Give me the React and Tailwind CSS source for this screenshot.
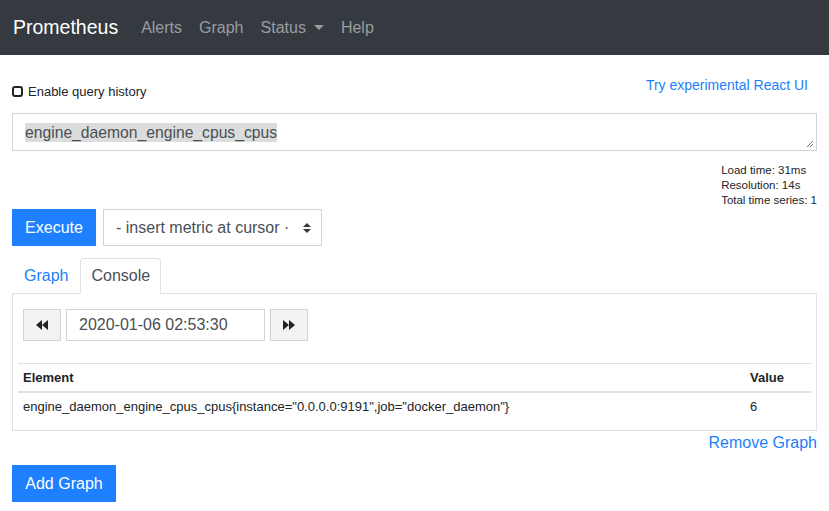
export default function App() {
  return (
    <div className="min-h-screen bg-white font-['Liberation_Sans',Arial,sans-serif] text-[#212529]">
      <nav className="h-[55px] bg-[#343a40] flex items-center pl-[13px]">
        <span className="text-white text-[19.5px] mr-[23px]">Prometheus</span>
        <div className="flex items-center gap-[17px] text-[16px] text-[#9a9da0]">
          <span>Alerts</span>
          <span>Graph</span>
          <span className="flex items-center">
            Status
            <svg width="10" height="6" viewBox="0 0 10 6" className="ml-[8px]">
              <path d="M0 0h10L5 5z" fill="#9a9da0" />
            </svg>
          </span>
          <span>Help</span>
        </div>
      </nav>

      <div className="px-3">
        <div className="h-[58px] flex justify-between items-start">
          <label className="mt-[29px] flex items-center text-[13px] leading-[15px]">
            <span className="w-[11px] h-[11px] border-2 border-[#222] rounded-[3px] mr-[5px]" />
            Enable query history
          </label>
          <a className="mt-[22px] mr-[9px] text-[14px] leading-[16px] text-[#1b7ffc]">Try experimental React UI</a>
        </div>

        <div className="relative h-[38px] border border-[#ced4da] flex items-center pl-[12px]">
          <span className="bg-[#dcdcdc] text-[#495057] text-[15.7px] leading-[19px]">engine_daemon_engine_cpus_cpus</span>
          <svg width="8" height="8" viewBox="0 0 8 8" className="absolute right-[2px] bottom-[2px]">
            <path d="M7 1L1 7M7 4L4 7" stroke="#777" strokeWidth="1" />
          </svg>
        </div>

        <div className="mt-[12px] flex justify-end">
          <div className="text-[11.5px] leading-[15px] text-[#212529]">
            <div>Load time: 31ms</div>
            <div>Resolution: 14s</div>
            <div>Total time series: 1</div>
          </div>
        </div>

        <div className="mt-[1px] flex items-center gap-[7px]">
          <button className="h-[37px] w-[84px] bg-[#1e80ff] text-white text-[16px] flex items-center justify-center">Execute</button>
          <div className="h-[37px] w-[219px] border border-[#ced4da] flex items-center pl-[12px] pr-[10px] text-[16px] text-[#495057]">
            <span className="flex-1 overflow-hidden whitespace-nowrap">- insert metric at cursor ·</span>
            <svg width="8" height="12" viewBox="0 0 8 12" className="ml-[4px]">
              <path d="M0 5L4 1L8 5z M0 7L4 11L8 7z" fill="#343a40" />
            </svg>
          </div>
        </div>

        <div className="mt-[12px] flex -mb-px relative">
          <a className="px-[11px] py-[5px] text-[16px] leading-[24px] text-[#1b7ffc] border border-transparent">Graph</a>
          <span className="px-[10px] py-[5px] text-[16px] leading-[24px] text-[#495057] bg-white border border-[#dee2e6] border-b-white rounded-t-[4px]">Console</span>
        </div>

        <div className="border border-[#dee2e6] p-[5px]">
          <div className="mt-[10px] ml-[5px] flex items-center gap-[5px] h-[32px]">
            <button className="h-[32px] w-[38px] border border-[#ced4da] bg-[#f3f3f3] flex items-center justify-center">
              <svg width="12" height="10" viewBox="0 0 12 10">
                <path d="M6 0V10L0 5z M12 0V10L6 5z" fill="#222" />
              </svg>
            </button>
            <div className="h-[32px] w-[199px] border border-[#ced4da] flex items-center pl-[12px] text-[16px] text-[#495057]">2020-01-06 02:53:30</div>
            <button className="h-[32px] w-[38px] border border-[#ced4da] bg-[#f3f3f3] flex items-center justify-center">
              <svg width="12" height="10" viewBox="0 0 12 10">
                <path d="M0 0V10L6 5z M6 0V10L12 5z" fill="#222" />
              </svg>
            </button>
          </div>

          <table className="mt-[22px] mb-[5px] w-full text-[13px] leading-[15px] border-collapse">
            <thead>
              <tr>
                <th className="text-left font-bold border-t border-[#dee2e6] border-b-2 pl-[5px] pt-[6px] pb-[6px]">Element</th>
                <th className="text-left font-bold border-t border-[#dee2e6] border-b-2 pl-[5px] pt-[6px] pb-[6px] w-[66px]">Value</th>
              </tr>
            </thead>
            <tbody>
              <tr>
                <td className="pl-[5px] pt-[6px] pb-[6px]">engine_daemon_engine_cpus_cpus{'{'}instance="0.0.0.0:9191",job="docker_daemon"{'}'}</td>
                <td className="pl-[5px] pt-[6px] pb-[6px]">6</td>
              </tr>
            </tbody>
          </table>
        </div>

        <div className="flex justify-end">
          <a className="text-[16px] leading-[24px] text-[#1b7ffc]">Remove Graph</a>
        </div>

        <button className="mt-[10px] h-[37px] w-[104px] bg-[#1e80ff] text-white text-[16px] flex items-center justify-center">Add Graph</button>
      </div>
    </div>
  );
}
